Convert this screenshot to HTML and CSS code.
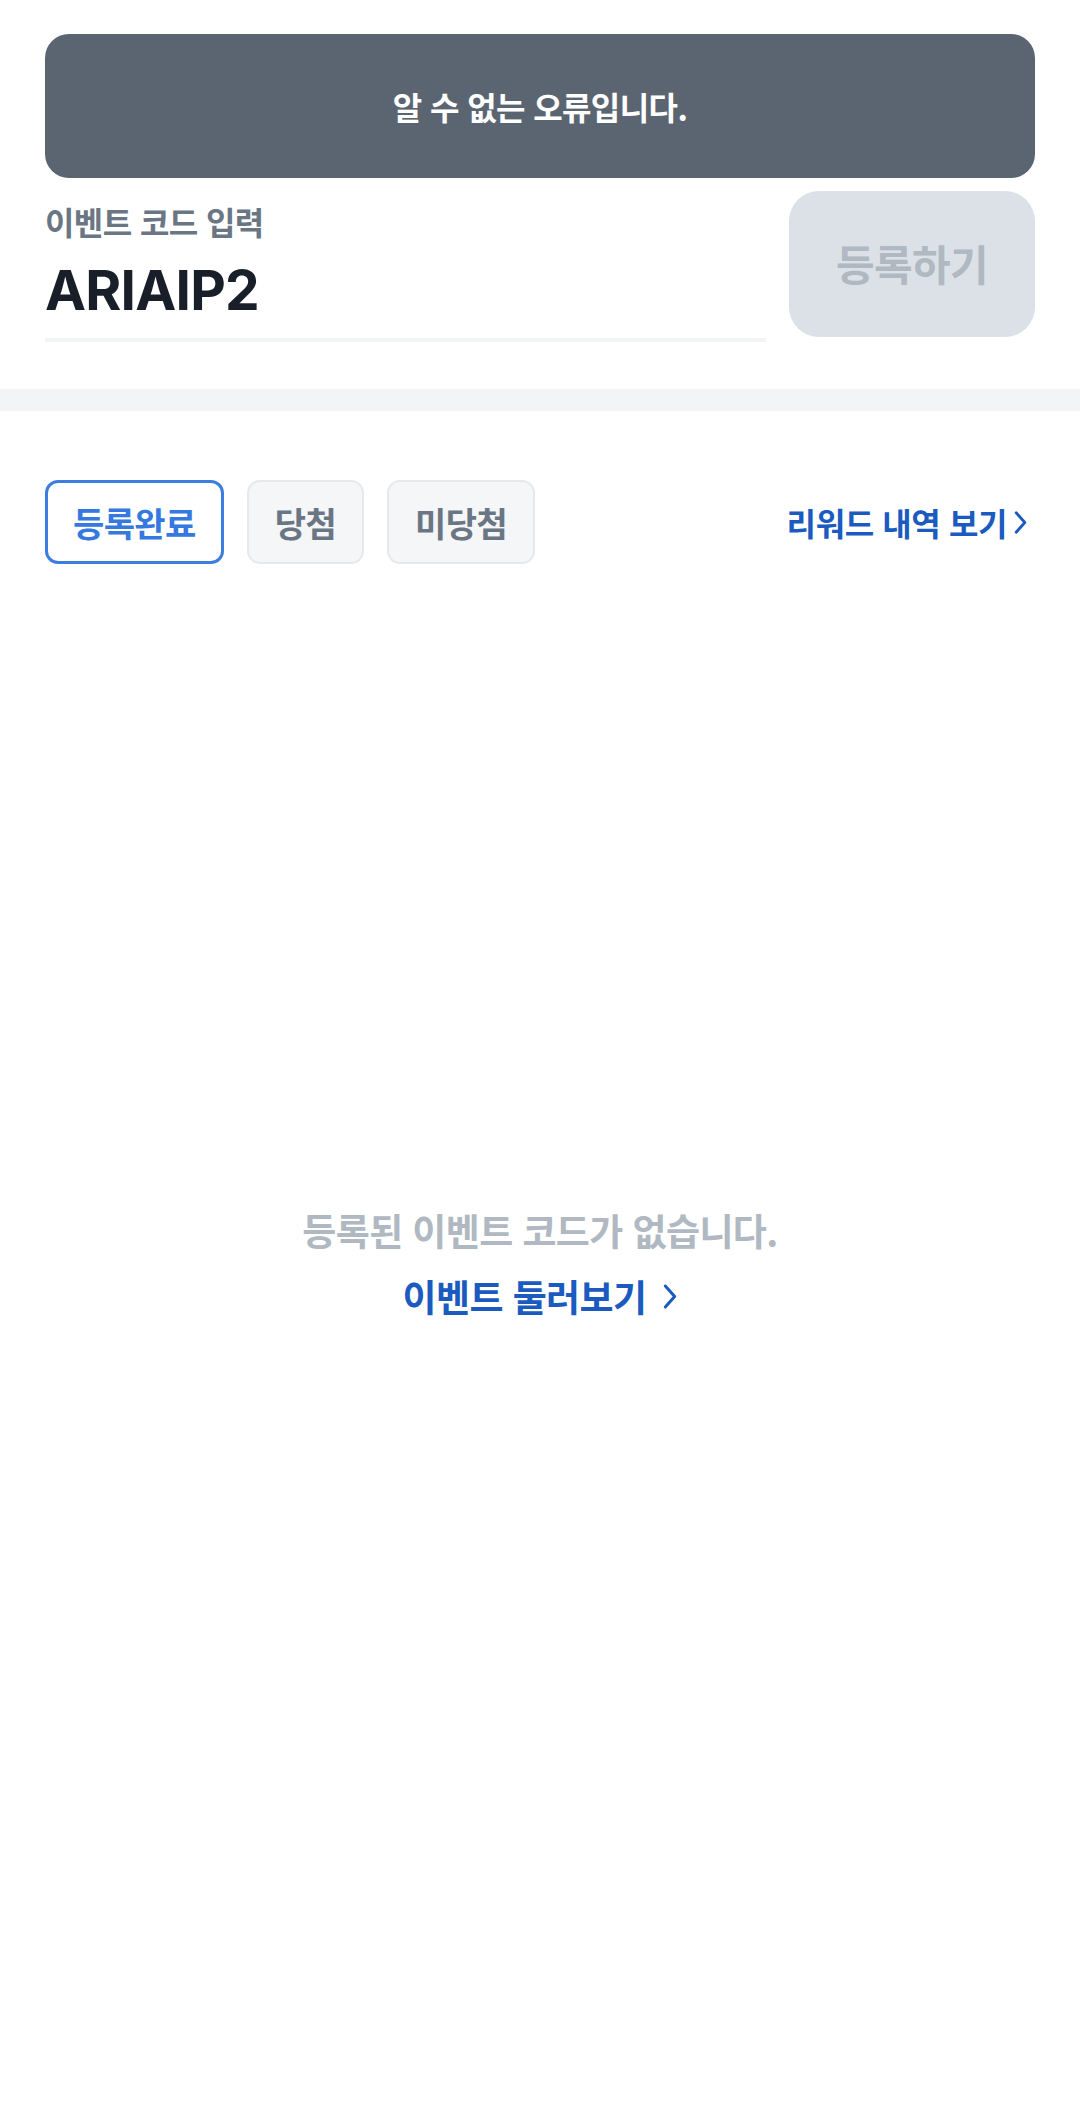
FILE: index.html
```html
<!DOCTYPE html>
<html lang="ko">
<head>
<meta charset="utf-8">
<title>이벤트 코드 입력</title>
<link rel="stylesheet" href="styles.css">
</head>
<body>
<div class="page">
  <section class="top">
    <div class="toast">알 수 없는 오류입니다.</div>
    <div class="form">
      <div class="field">
        <div class="label">이벤트 코드 입력</div>
        <div class="value">ARIAIP2</div>
        <div class="underline"></div>
      </div>
      <button class="submit" type="button">등록하기</button>
    </div>
  </section>
  <div class="band"></div>
  <section class="list">
    <div class="tabs-row">
      <div class="tabs">
        <div class="tab active">등록완료</div>
        <div class="tab">당첨</div>
        <div class="tab">미당첨</div>
      </div>
      <a class="reward-link">리워드 내역 보기<svg class="chev small" viewBox="0 0 12 22" aria-hidden="true"><polyline points="2,2 10,11 2,20"/></svg></a>
    </div>
    <div class="empty">
      <p class="empty-text">등록된 이벤트 코드가 없습니다.</p>
      <a class="browse-link">이벤트 둘러보기<svg class="chev big" viewBox="0 0 12 22" aria-hidden="true"><polyline points="2,2 10,11 2,20"/></svg></a>
    </div>
  </section>
</div>
</body>
</html>
```

FILE: styles.css
```css
* { box-sizing: border-box; }
html, body {
  margin: 0;
  padding: 0;
  background: #ffffff;
}
body {
  font-family: "Inter", "Noto Sans CJK KR", sans-serif;
  color: #191f28;
  width: 1080px;
  height: 2124px;
  overflow: hidden;
}
.page { width: 1080px; }

.top { padding: 34px 45px 47px; }

.toast {
  height: 144px;
  border-radius: 24px;
  background: #5b6572;
  color: #ffffff;
  font-family: "Noto Sans CJK KR", sans-serif;
  font-weight: 700;
  font-size: 32px;
  letter-spacing: -0.6px;
  display: flex;
  align-items: center;
  justify-content: center;
}

.form {
  margin-top: 13px;
  display: flex;
  gap: 23px;
  align-items: flex-start;
}
.field {
  flex: 1;
  padding-top: 10px;
}
.label {
  font-family: "Noto Sans CJK KR", sans-serif;
  font-weight: 700;
  font-size: 32px;
  line-height: 40px;
  color: #6b7684;
  letter-spacing: -0.6px;
}
.value {
  margin-top: 16px;
  font-family: "Inter", sans-serif;
  font-weight: 700;
  font-size: 55px;
  line-height: 66px;
  color: #191f28;
  letter-spacing: -0.8px;
}
.underline {
  margin-top: 15px;
  height: 4px;
  background: #f2f4f6;
}
.submit {
  width: 246px;
  height: 146px;
  border: 0;
  border-radius: 30px;
  background: #dce1e7;
  color: #b0b8c1;
  font-family: "Noto Sans CJK KR", sans-serif;
  font-weight: 700;
  font-size: 42px;
  letter-spacing: -0.6px;
  padding: 0 0 4px;
}

.band {
  height: 22px;
  background: #f3f4f6;
}

.list { padding: 69px 45px 0; }
.tabs-row {
  display: flex;
  align-items: center;
  justify-content: space-between;
}
.tabs {
  display: flex;
  gap: 23px;
}
.tab {
  height: 84px;
  padding: 0 26px;
  border: 2px solid #e6e9ec;
  border-radius: 13px;
  background: #f4f6f8;
  color: #6b7684;
  font-family: "Noto Sans CJK KR", sans-serif;
  font-weight: 700;
  font-size: 34px;
  letter-spacing: -0.6px;
  display: flex;
  align-items: center;
}
.tab.active {
  border: 3px solid #3c7de0;
  background: #ffffff;
  color: #3478e0;
  padding: 0 25px;
}
.reward-link {
  display: flex;
  align-items: center;
  gap: 7px;
  margin-right: 8px;
  font-family: "Noto Sans CJK KR", sans-serif;
  font-weight: 700;
  font-size: 32px;
  letter-spacing: -0.4px;
  color: #1b5bbf;
}
.chev {
  fill: none;
  stroke: currentColor;
  stroke-width: 2.6;
  stroke-linecap: round;
  stroke-linejoin: round;
}
.chev.small { width: 13px; height: 25px; }
.chev.big { width: 14px; height: 27px; margin-left: 17px; }

.empty {
  margin-top: 640px;
  display: flex;
  flex-direction: column;
  align-items: center;
}
.empty-text {
  margin: 0;
  font-family: "Noto Sans CJK KR", sans-serif;
  font-weight: 700;
  font-size: 37px;
  line-height: 52px;
  letter-spacing: -0.6px;
  color: #b0b8c1;
}
.browse-link {
  margin-top: 14px;
  display: flex;
  align-items: center;
  font-family: "Noto Sans CJK KR", sans-serif;
  font-weight: 700;
  font-size: 37px;
  line-height: 52px;
  letter-spacing: -0.6px;
  color: #1b5bbf;
}
```
